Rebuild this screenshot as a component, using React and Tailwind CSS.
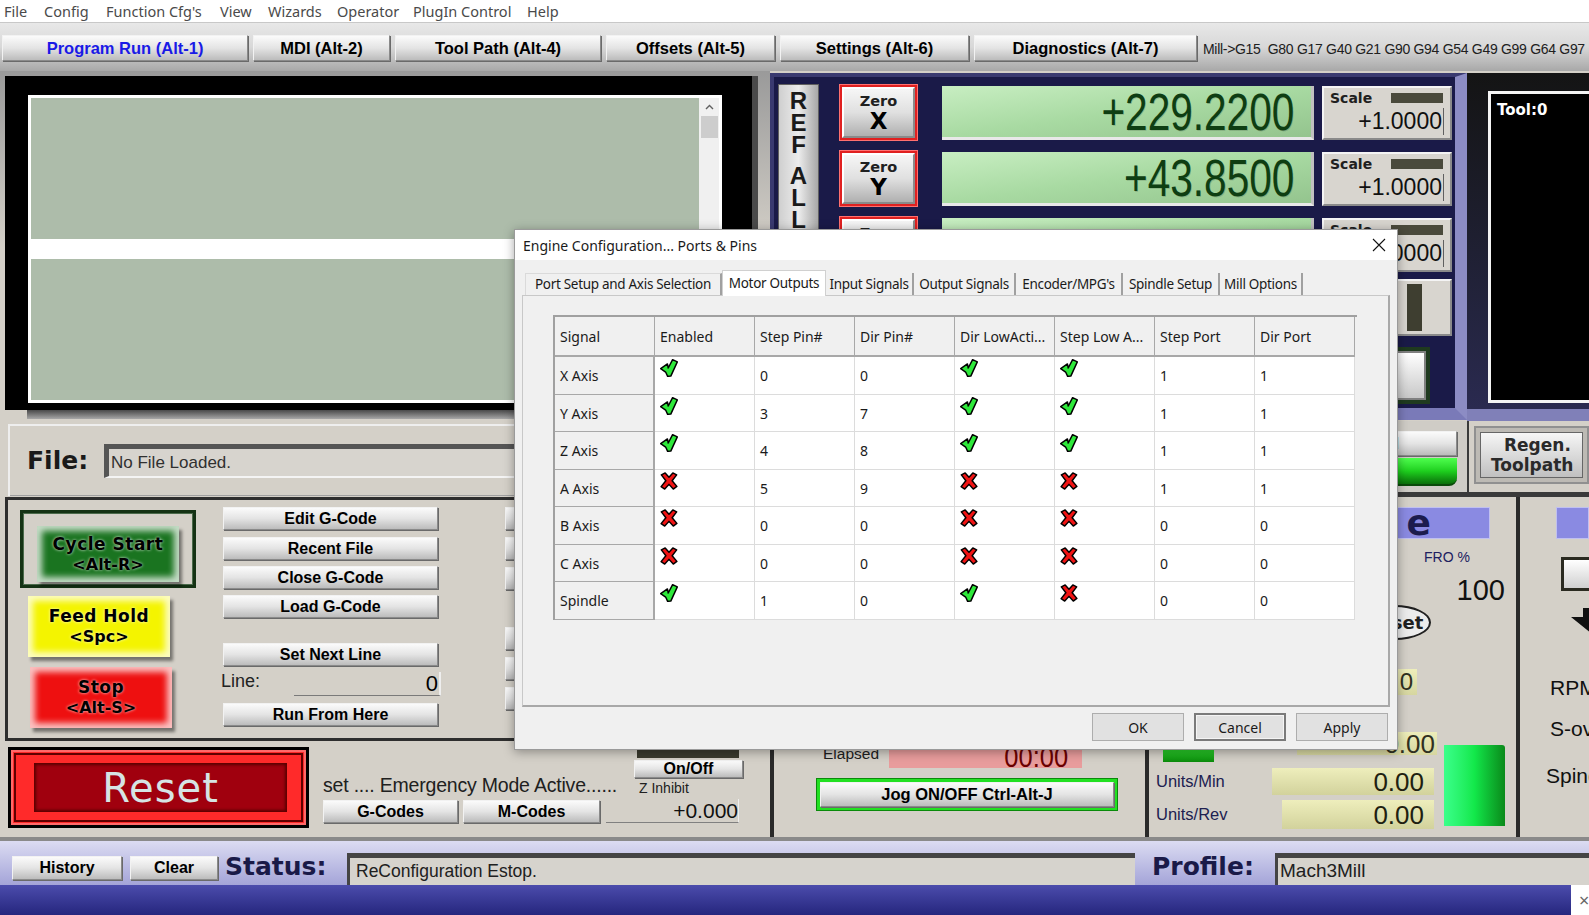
import React from "react";

const NARROW = "font-['Liberation_Sans',Arial,sans-serif]";
const VERD = "font-['DejaVu_Sans',Verdana,sans-serif]";
const UI = "font-['Noto_Sans','Segoe_UI',sans-serif]";
const ARIAL = "font-['Liberation_Sans',Arial,sans-serif]";

function MBtn({ className = "", children }) {
  return (
    <div
      className={`flex items-center justify-center bg-linear-to-b from-[#fbfbfb] via-[#e4e4e4] to-[#bcbcbc] border border-[#8a8a8a] border-t-[#f2f2f2] border-l-[#f2f2f2] shadow-[1px_1px_0_#6a6a6a] ${ARIAL} font-bold text-black whitespace-nowrap ${className}`}
    >
      {children}
    </div>
  );
}

function Check() {
  return (
    <svg width="18" height="18" viewBox="0 0 16 16">
      <path d="M0.6 8.6 L6.6 4.4 L7.3 8 L11.2 0.6 L15.4 2.6 L9.6 15.2 L6.8 15.4 L5 11.6 Z" fill="#2ee83a" stroke="#000" strokeWidth="1.3" strokeLinejoin="round" />
    </svg>
  );
}

function Cross() {
  return (
    <svg width="18" height="18" viewBox="0 0 16 16">
      <path d="M1.2 2.6 L4.6 0.8 L8 4.6 L11.4 0.8 L14.8 2.6 L10.8 7.8 L15 12.8 L11.8 15.2 L8 11 L4.2 15.2 L1 13 L5.2 7.8 Z" fill="#f01414" stroke="#000" strokeWidth="1.3" strokeLinejoin="round" />
    </svg>
  );
}

function MenuBar() {
  const items = [
    ["File", "w-[40px]"],
    ["Config", "w-[62px]"],
    ["Function Cfg's", "w-[114px]"],
    ["View", "w-[48px]"],
    ["Wizards", "w-[69px]"],
    ["Operator", "w-[76px]"],
    ["PlugIn Control", "w-[114px]"],
    ["Help", "w-[50px]"],
  ];
  return (
    <div className={`h-[23px] bg-white flex items-center pl-[4px] ${UI} text-[14.5px] text-[#4a4a4a] border-b border-[#c8c8c8]`}>
      {items.map(([t, w]) => (
        <div key={t} className={`${w} whitespace-nowrap leading-none`}>{t}</div>
      ))}
    </div>
  );
}

function TabsRow() {
  const tabs = [
    ["Program Run (Alt-1)", "w-[246px]", true],
    ["MDI (Alt-2)", "w-[137px]"],
    ["Tool Path (Alt-4)", "w-[206px]"],
    ["Offsets (Alt-5)", "w-[169px]"],
    ["Settings (Alt-6)", "w-[189px]"],
    ["Diagnostics (Alt-7)", "w-[223px]"],
  ];
  return (
    <div className="h-[48px] bg-linear-to-b from-[#e8e8e8] via-[#d8d8d8] to-[#a8a8a8] flex items-start pt-[12px] pl-[2px]">
      <div className="flex gap-[5px]">
        {tabs.map(([t, w, active]) => (
          <MBtn key={t} className={`${w} h-[26px] text-[16.5px]`}>
            <span className={active ? "text-[#1a1ae6]" : ""}>{t}</span>
          </MBtn>
        ))}
      </div>
      <div className={`ml-[6px] mt-[4px] ${NARROW} text-[14px] text-[#202020] whitespace-nowrap tracking-[-0.3px]`}>
        Mill-&gt;G15&nbsp; G80 G17 G40 G21 G90 G94 G54 G49 G99 G64 G97
      </div>
    </div>
  );
}

function GlowBtn({ className = "", color, line1, line2 }) {
  return (
    <div className={`flex flex-col items-center justify-center ${color} shadow-[inset_0_0_6px_5px_rgba(255,255,255,0.75),3px_4px_3px_rgba(0,0,0,0.45)] ${VERD} font-bold text-black ${className}`}>
      <div className="text-[17px] leading-[21px] tracking-[0.5px] [text-shadow:0_0_3px_rgba(255,255,255,0.9)]">{line1}</div>
      <div className="text-[16px] leading-[20px] [text-shadow:0_0_3px_rgba(255,255,255,0.9)]">{line2}</div>
    </div>
  );
}

function LeftColumn() {
  return (
    <div className="w-[770px] shrink-0 flex flex-col">
      {/* Gcode frame */}
      <div className="h-[353px] pt-[5px] pl-[5px] bg-linear-to-b from-[#9a9a9a] via-[#d4d0c8] to-[#d4d0c8]">
        <div className="w-[753px] h-[334px] bg-black pt-[19px] pl-[23px] border-r-[6px] border-r-[#4a4a4a]">
          <div className="w-[694px] h-[308px] border-[3px] border-white bg-white flex">
            <div className="flex-1 flex flex-col bg-[#adbcaa]">
              <div className="h-[141px]" />
              <div className="h-[20px] bg-white" />
              <div className="flex-1" />
            </div>
            <div className="w-[20px] bg-[#f0f0f0] flex flex-col items-center">
              <div className="h-[18px] flex items-center justify-center">
                <svg width="9" height="6" viewBox="0 0 9 6"><path d="M1 5 L4.5 1.5 L8 5" stroke="#606060" strokeWidth="1.4" fill="none" /></svg>
              </div>
              <div className="w-[17px] h-[22px] bg-[#cdcdcd]" />
            </div>
          </div>
        </div>
        <div className="h-[9px] ml-[22px] w-[731px] bg-linear-to-b from-[#4a4a4a] to-[#a8a8a8]" />
      </div>

      {/* File row */}
      <div className="h-[72px] ml-[8px] bg-[#d4d0c8] border-t-2 border-l-2 border-[#eeeeee] shadow-[inset_-1px_-1px_0_#a0a0a0] flex items-center pl-[17px]">
        <div className={`${VERD} font-bold text-[25px] text-[#1a1a1a] w-[77px]`}>File:</div>
        <div className={`flex-1 h-[34px] bg-[#d7d4ce] border-t-[5px] border-l-[5px] border-[#555] border-b-2 border-b-[#f4f4f4] flex items-center pl-[2px] ${ARIAL} text-[17px] text-[#303030]`}>
          No File Loaded.
        </div>
      </div>

      {/* Controls panel */}
      <div className="h-[244px] ml-[5px] mt-[1px] border-[3px] border-r-0 border-[#2e2e2e] bg-[#d4d0c8] flex">
        <div className="w-[215px] pl-[12px] pt-[10px] flex flex-col">
          <div className="w-[176px] h-[78px] border-[3px] border-[#143214] flex items-end pl-[14px] pb-[3px] shadow-[inset_0_0_0_1px_#4a6a4a]">
            <GlowBtn className="w-[142px] h-[56px]" color="bg-[#1a7420]" line1="Cycle Start" line2="<Alt-R>" />
          </div>
          <GlowBtn className="w-[142px] h-[61px] mt-[8px] ml-[8px]" color="bg-[#f4f400]" line1="Feed Hold" line2="<Spc>" />
          <GlowBtn className="w-[142px] h-[61px] mt-[10px] ml-[10px]" color="bg-[#ee1010]" line1="Stop" line2="<Alt-S>" />
        </div>
        <div className="w-[218px] pt-[7px] flex flex-col">
          <MBtn className="w-[215px] h-[23px] text-[16px]">Edit G-Code</MBtn>
          <MBtn className="w-[215px] h-[23px] text-[16px] mt-[7px]">Recent File</MBtn>
          <MBtn className="w-[215px] h-[23px] text-[16px] mt-[6px]">Close G-Code</MBtn>
          <MBtn className="w-[215px] h-[23px] text-[16px] mt-[6px]">Load G-Code</MBtn>
          <MBtn className="w-[215px] h-[23px] text-[16px] mt-[25px]">Set Next Line</MBtn>
          <div className="h-[25px] mt-[5px] flex items-end">
            <div className={`${ARIAL} text-[18px] text-[#222] w-[73px] pb-[1px] -ml-[2px]`}>Line:</div>
            <div className={`w-[147px] h-[24px] border-b border-[#7a7a7a] border-r-2 border-r-[#eee] text-right ${ARIAL} text-[22px] leading-[24px] text-black pr-[1px]`}>0</div>
          </div>
          <MBtn className="w-[215px] h-[23px] text-[16px] mt-[7px]">Run From Here</MBtn>
        </div>
        <div className="ml-[64px] pt-[7px] flex flex-col gap-[7px]">
          <MBtn className="w-[200px] h-[23px]" />
          <MBtn className="w-[200px] h-[23px]" />
          <MBtn className="w-[200px] h-[23px]" />
          <MBtn className="w-[200px] h-[23px] mt-[30px]" />
          <MBtn className="w-[200px] h-[23px]" />
          <MBtn className="w-[200px] h-[23px]" />
        </div>
      </div>

      {/* Reset row */}
      <div className="h-[96px] bg-[#d4d0c8] flex pt-[6px]">
        <div className="ml-[8px] w-[301px] h-[81px] bg-black p-[3px]">
          <div className="w-full h-full bg-[#ff2a2a] p-[3px] shadow-[inset_0_0_0_2px_#ff6a6a]">
            <div className="w-full h-full border-2 border-[#600000] p-[8px] pl-[18px] pr-[14px]">
              <div className={`w-full h-full bg-[#a0000e] shadow-[inset_0_0_3px_2px_#5a0000] flex items-center justify-center ${VERD} text-[40px] text-[#d6e4e4] tracking-[1px]`}>
                Reset
              </div>
            </div>
          </div>
        </div>
        <div className="ml-[14px] w-[279px] flex flex-col pt-[26px]">
          <div className={`${NARROW} text-[19.5px] leading-[24px] text-[#202020] whitespace-nowrap tracking-[-0.2px]`}>set .... Emergency Mode Active......</div>
          <div className="flex gap-[5px] mt-[3px]">
            <MBtn className="w-[135px] h-[23px] text-[16px]">G-Codes</MBtn>
            <MBtn className="w-[137px] h-[23px] text-[16px]">M-Codes</MBtn>
          </div>
        </div>
        <div className="ml-[4px] w-[137px] flex flex-col items-start">
          <div className="ml-[31px] w-[102px] h-[13px] bg-[#3a3a2e] -mt-[2px]" />
          <MBtn className="ml-[28px] w-[109px] h-[18px] text-[16px] mt-[2px]">On/Off</MBtn>
          <div className={`ml-[33px] ${NARROW} text-[14px] leading-[18px] text-[#202020] mt-[1px]`}>Z Inhibit</div>
          <div className={`w-[133px] h-[24px] mt-[2px] border-b border-[#808080] border-r border-r-[#eee] text-right ${NARROW} text-[21px] leading-[24px] text-[#101010]`}>+0.000</div>
        </div>
      </div>
    </div>
  );
}

function ZeroBtn({ axis }) {
  return (
    <div className="w-[79px] h-[57px] bg-[#e02020] p-[3px] shadow-[inset_0_0_0_1px_#ff7070]">
      <div className={`w-full h-full bg-linear-to-b from-[#f6f6f6] via-[#e0e0e0] to-[#b0b0b0] border-2 border-[#8a8a8a] border-t-white border-l-white flex flex-col items-center justify-center ${VERD} text-black`}>
        {axis && <div className="text-[14.5px] font-bold leading-[17px] text-[#202020]">Zero</div>}
        {axis && <div className="text-[23px] font-bold leading-[23px]">{axis}</div>}
      </div>
    </div>
  );
}

function DroDisplay({ value }) {
  return (
    <div className="w-[372px] h-[54px] bg-linear-to-br from-[#c8eec2] via-[#a8daa2] to-[#94c48e] border-b-[3px] border-[#e8e8e8] border-r-[3px] border-r-[#c0c0c0] flex items-center justify-end pr-[17px]">
      {value && (
        <span className={`inline-block origin-right scale-x-[0.78] ${ARIAL} text-[52px] leading-[50px] text-[#0e3e12] [text-shadow:1px_1px_0_rgba(0,0,0,0.15)]`}>{value}</span>
      )}
    </div>
  );
}

function ScaleBox({ value }) {
  return (
    <div className="w-[130px] h-[54px] bg-[#d8d5cf] border-2 border-[#f4f4f4] border-r-[#8a8a8a] border-b-[#8a8a8a] flex flex-col pl-[6px] pr-[6px]">
      <div className="flex items-center h-[20px]">
        <div className={`${VERD} font-bold text-[14px] text-[#202020] w-[61px]`}>Scale</div>
        <div className="w-[52px] h-[10px] bg-[#4a4a3c]" />
      </div>
      <div className={`text-right ${ARIAL} text-[23px] leading-[27px] text-[#101010] border-r border-[#606060] pr-[1px]`}>{value}</div>
    </div>
  );
}

function RightColumn() {
  return (
    <div className="flex-1 min-w-0 flex flex-col overflow-hidden">
      {/* top row */}
      <div className="h-[350px] flex bg-[#d4d0c8]">
        <div className="w-[697px] shrink-0 h-[347px] mt-[2px] bg-[#1a1a48] border-t-[4px] border-l-[4px] border-[#3a3a70] border-r-[12px] border-r-[#8c8cc4] border-b-[12px] border-b-[#7a7ab8] flex pt-[7px] pl-[4px]">
          <div className={`w-[41px] h-[322px] bg-linear-to-r from-[#cfcfcf] via-[#ececec] to-[#a8a8a8] border border-[#606060] flex flex-col items-center pt-[5px] ${ARIAL} font-bold text-[24px] leading-[22px] text-[#1a1a1a]`}>
            <div>R</div>
            <div>E</div>
            <div>F</div>
            <div className="mt-[9px]">A</div>
            <div>L</div>
            <div>L</div>
          </div>
          <div className="ml-[20px] flex flex-col gap-[9px]">
            <ZeroBtn axis="X" />
            <ZeroBtn axis="Y" />
            <ZeroBtn axis="Z" />
            <ZeroBtn />
          </div>
          <div className="ml-[24px] flex flex-col gap-[12px] pt-[2px]">
            <DroDisplay value="+229.2200" />
            <DroDisplay value="+43.8500" />
            <DroDisplay />
            <DroDisplay />
          </div>
          <div className="ml-[8px] flex flex-col gap-[12px] pt-[2px]">
            <ScaleBox value="+1.0000" />
            <ScaleBox value="+1.0000" />
            <ScaleBox value="+1.0000" />
            <div className="w-[130px] h-[57px] -mt-[5px] bg-[#d8d5cf] border-2 border-[#f4f4f4] border-r-[#8a8a8a] border-b-[#8a8a8a] flex items-center justify-end pr-[28px]">
              <div className="w-[15px] h-[47px] bg-[#3e3e30]" />
            </div>
            <div className="w-[130px] h-[57px] flex items-center justify-end pr-[22px] -mt-[1px]">
              <div className="w-[64px] h-[57px] bg-[#1f3a1f] p-[4px]">
                <div className="w-full h-full bg-linear-to-b from-white to-[#c8c8c8] border-2 border-[#808080]" />
              </div>
            </div>
          </div>
        </div>
        <div className="flex-1 min-w-0 bg-linear-to-b from-[#141414] to-[#2a2a50] pt-[18px] pl-[21px] mt-[2px] border-b-[12px] border-b-[#8080b8]">
          <div className={`h-[312px] bg-black border-[3px] border-[#f4f4f4] border-r-0 pl-[6px] pt-[5px] ${VERD} font-bold text-[15px] text-white`}>
            Tool:0
          </div>
        </div>
      </div>

      {/* strip */}
      <div className="h-[76px] flex bg-[#d4d0c8]">
        <div className="w-[697px] shrink-0 bg-[#cfccc6] border-b-[5px] border-[#3a3a3a] flex justify-end items-start pt-[10px] pr-[10px]">
          <div className="flex flex-col">
            <MBtn className="w-[210px] h-[25px] text-[16px]">Tool Control</MBtn>
            <div className="w-[210px] h-[28px] mt-[2px] bg-linear-to-b from-[#4dff4d] via-[#1ed01e] to-[#0a700a] rounded-br-[8px] border-b-2 border-[#0a4a0a]" />
          </div>
        </div>
        <div className="flex-1 min-w-0 border-l-2 border-[#3a3a3a] border-b-[5px] border-b-[#3a3a3a] pt-[5px] pl-[5px]">
          <div className="h-[58px] bg-[#bdbab4] border-2 border-[#909090] p-[4px] overflow-hidden">
            <div className={`h-full bg-linear-to-b from-[#f6f6f6] to-[#c0c0c0] border border-[#666] flex flex-col items-start justify-center pl-[10px] ${VERD} font-bold text-[17px] leading-[20px] text-[#2a2a2a] whitespace-nowrap`}>
              <div className="pl-[13px]">Regen.</div>
              <div>Toolpath</div>
            </div>
          </div>
        </div>
      </div>

      {/* panels row */}
      <div className="flex-1 flex bg-[#d4d0c8]">
        {/* middle panel */}
        <div className="w-[375px] shrink-0 border-l-[4px] border-[#2a2a2a] flex flex-col">
          <div className="flex items-start mt-[248px]">
            <div className={`ml-[49px] w-[66px] ${ARIAL} text-[15.5px] text-[#202020] leading-[18px]`}>Elapsed</div>
            <div className="w-[193px] h-[23px] bg-[#e89c9c] flex items-center justify-end pr-[14px]">
              <span className={`inline-block origin-right scale-x-[0.85] ${ARIAL} text-[30px] text-[#6a0000] leading-[22px]`}>00:00</span>
            </div>
          </div>
          <div className="ml-[42px] mt-[10px] w-[302px] h-[33px] bg-[#22e022] p-[3px] border border-[#0a8a0a]">
            <MBtn className="w-full h-full text-[16.5px]">Jog ON/OFF Ctrl-Alt-J</MBtn>
          </div>
        </div>
        {/* feed panel */}
        <div className="w-[375px] shrink-0 flex flex-col border-l-[4px] border-r-[4px] border-[#2a2a2a]">
          <div className={`ml-[11px] mt-[10px] w-[330px] h-[32px] bg-[#8a8ae2] border border-[#c0c0f0] flex items-center justify-end pr-[48px] ${VERD} font-bold text-[36px] tracking-[10px] text-[#1c1c4e] leading-[30px] overflow-hidden whitespace-nowrap`}>
            Feed Rate
          </div>
          <div className={`pl-[275px] mt-[10px] ${ARIAL} text-[14px] text-[#202060] leading-[16px]`}>FRO %</div>
          <div className={`text-right pr-[11px] mt-[11px] ${ARIAL} text-[29px] leading-[28px] text-[#101010]`}>100</div>
          <div className="ml-[209px] mt-[1px] w-[73px] h-[35px] rounded-[50%] border-2 border-[#202020] bg-[#ececec] flex items-center justify-center">
            <span className={`${VERD} font-bold text-[18px] text-[#202020] whitespace-nowrap`}>Reset</span>
          </div>
          <div className="ml-[128px] mt-[29px] w-[140px] h-[26px] bg-linear-to-b from-[#eeeeba] to-[#d6d6a0] flex items-center justify-end pr-[4px]">
            <span className={`${ARIAL} text-[24px] text-[#303020] leading-none`}>0</span>
          </div>
          <div className="flex mt-[37px]">
            <div className="w-[295px] flex flex-col">
              <div className="flex h-[23px]">
                <div className="w-[51px] h-[14px] mt-[16px] ml-[14px] bg-linear-to-b from-[#30e030] to-[#0a8a0a]" />
                <div className={`ml-[83px] w-[140px] h-[23px] bg-linear-to-b from-[#eeeeba] to-[#d6d6a0] flex items-center justify-end pr-[2px] ${ARIAL} text-[26px] text-[#303020] leading-none`}>0.00</div>
              </div>
              <div className="flex items-center mt-[13px]">
                <div className={`ml-[7px] w-[116px] ${ARIAL} text-[16.5px] text-[#202050]`}>Units/Min</div>
                <div className={`w-[162px] h-[27px] bg-linear-to-b from-[#eeeebc] to-[#d2d29c] flex items-center justify-end pr-[10px] ${ARIAL} text-[26px] text-[#202010] leading-none`}>0.00</div>
              </div>
              <div className="flex items-center mt-[5px]">
                <div className={`ml-[7px] w-[126px] ${ARIAL} text-[16.5px] text-[#202050]`}>Units/Rev</div>
                <div className={`w-[152px] h-[29px] bg-linear-to-b from-[#eeeebc] to-[#d2d29c] flex items-center justify-end pr-[10px] ${ARIAL} text-[26px] text-[#202010] leading-none`}>0.00</div>
              </div>
            </div>
            <div className="w-[61px] h-[81px] mt-[13px] bg-linear-to-r from-[#3aff8a] via-[#12e84a] to-[#0a8a1a] rounded-tr-[3px]" />
          </div>
        </div>
        {/* spindle panel */}
        <div className="flex-1 min-w-0 overflow-hidden flex flex-col">
          <div className="ml-[36px] mt-[10px] h-[32px] bg-[#8a8ae2] border border-[#c0c0f0]" />
          <div className="ml-[41px] mt-[18px] h-[34px] bg-[#2a2a20] p-[3px] pr-0">
            <div className="w-full h-full bg-linear-to-b from-white to-[#d0d0d0]" />
          </div>
          <div className="ml-[51px] mt-[17px]">
            <svg width="50" height="26" viewBox="0 0 50 26"><path d="M0 9 L12 9 L12 0 L30 0 L30 9 L42 9 L21 26 Z" fill="#111" /></svg>
          </div>
          <div className={`ml-[30px] mt-[42px] ${ARIAL} text-[21px] text-[#101010] whitespace-nowrap leading-[24px]`}>RPM</div>
          <div className={`ml-[30px] mt-[17px] ${ARIAL} text-[21px] text-[#101010] whitespace-nowrap leading-[24px]`}>S-ov</div>
          <div className={`ml-[26px] mt-[23px] ${ARIAL} text-[21px] text-[#101010] whitespace-nowrap leading-[24px]`}>Spindle</div>
        </div>
      </div>
    </div>
  );
}

function StatusBar() {
  return (
    <div className="h-[78px] flex flex-col border-t-[4px] border-[#8a8a8a]">
      <div className="h-[44px] bg-linear-to-b from-[#dcdcf2] to-[#a4a4d8] flex items-start pl-[12px] pt-[12px] overflow-hidden">
        <MBtn className="w-[110px] h-[24px] text-[16px] mt-[3px] shrink-0">History</MBtn>
        <MBtn className="w-[88px] h-[24px] text-[16px] ml-[8px] mt-[3px] shrink-0">Clear</MBtn>
        <div className={`ml-[7px] w-[122px] shrink-0 ${VERD} font-bold text-[25px] text-[#1a1a48] leading-[28px]`}>Status:</div>
        <div className={`w-[788px] shrink-0 h-[32px] bg-[#d6d3cd] border-t-[5px] border-l-[3px] border-[#444] flex items-center pl-[6px] ${ARIAL} text-[17.5px] text-[#202020]`}>
          ReConfiguration Estop.
        </div>
        <div className={`ml-[17px] w-[123px] shrink-0 ${VERD} font-bold text-[25px] text-[#1a1a48] leading-[28px]`}>Profile:</div>
        <div className={`flex-1 h-[32px] bg-[#d6d3cd] border-t-[5px] border-l-[3px] border-[#444] flex items-center pl-[2px] ${ARIAL} text-[19px] text-[#202020]`}>
          Mach3Mill
        </div>
      </div>
      <div className="flex-1 bg-linear-to-b from-[#4c4cac] to-[#26267e] flex justify-end">
        <div className="w-[18px] bg-white flex items-center pl-[8px] text-[#666] text-[18px] overflow-hidden">×</div>
      </div>
    </div>
  );
}

function Dialog() {
  const cols = ["Signal", "Enabled", "Step Pin#", "Dir Pin#", "Dir LowActi...", "Step Low A...", "Step Port", "Dir Port"];
  const rows = [
    ["X Axis", true, "0", "0", true, true, "1", "1"],
    ["Y Axis", true, "3", "7", true, true, "1", "1"],
    ["Z Axis", true, "4", "8", true, true, "1", "1"],
    ["A Axis", false, "5", "9", false, false, "1", "1"],
    ["B Axis", false, "0", "0", false, false, "0", "0"],
    ["C Axis", false, "0", "0", false, false, "0", "0"],
    ["Spindle", true, "1", "0", true, false, "0", "0"],
  ];
  const tabs = [
    ["Port Setup and Axis Selection", "w-[197px]"],
    ["Motor Outputs", "w-[104px]"],
    ["Input Signals", "w-[88px]"],
    ["Output Signals", "w-[102px]"],
    ["Encoder/MPG's", "w-[107px]"],
    ["Spindle Setup", "w-[97px]"],
    ["Mill Options", "w-[83px]"],
  ];
  return (
    <div className={`absolute left-[514px] top-[229px] w-[884px] h-[521px] bg-[#f0f0f0] border border-[#9a9a9a] shadow-[0_2px_10px_rgba(0,0,0,0.35)] flex flex-col ${UI} text-[#1a1a1a]`}>
      <div className="h-[30px] bg-white flex items-center pl-[8px] pr-[11px] justify-between">
        <div className="text-[14px] leading-none pt-[1px]">Engine Configuration... Ports &amp; Pins</div>
        <svg width="14" height="14" viewBox="0 0 14 14"><path d="M1 1 L13 13 M13 1 L1 13" stroke="#111" strokeWidth="1.1" /></svg>
      </div>
      <div className="flex items-end pl-[10px] mt-[10px] h-[25px]">
        {tabs.map(([t, w], i) => {
          const active = i === 1;
          return (
            <div
              key={t}
              className={`${w} ${active ? "h-[26px] bg-white border border-b-0 border-[#d0d0d0] -mb-px z-10" : "h-[22px] border-r-2 border-[#a0a0a0] bg-[#f0f0f0]"} ${i === 0 ? "bg-[#e6e6e6] border-l border-t border-l-[#dadada] border-t-[#dadada]" : ""} flex items-center justify-center text-[13.5px] whitespace-nowrap tracking-[-0.3px]`}
            >
              {t}
            </div>
          );
        })}
      </div>
      <div className="mx-[7px] h-[412px] border border-[#c8c8c8] border-r-2 border-r-[#a8a8a8] border-b-2 border-b-[#a8a8a8] bg-[#f0f0f0] pl-[30px] pt-[19px]">
        <div className="w-[804px] border-l-2 border-t-2 border-[#a0a0a0]">
          <div className="flex h-[40px]">
            {cols.map((c) => (
              <div key={c} className="w-[100px] h-full bg-[#f0f0f0] border-r border-b-2 border-[#a8a8a8] flex items-center pl-[5px] text-[14px] whitespace-nowrap overflow-hidden">
                {c}
              </div>
            ))}
          </div>
          {rows.map((r) => (
            <div key={r[0]} className="flex h-[37.5px]">
              {r.map((v, j) => (
                <div
                  key={j}
                  className={`w-[100px] h-full border-r border-b ${j === 0 ? "bg-[#f0f0f0] border-[#a8a8a8] border-r-2" : "bg-white border-[#dcdcdc]"} relative pl-[5px] flex items-center text-[14px]`}
                >
                  {typeof v === "boolean" ? (
                    <div className="absolute left-[5px] top-[2px]">{v ? <Check /> : <Cross />}</div>
                  ) : (
                    <span className="pt-[1px]">{v}</span>
                  )}
                </div>
              ))}
            </div>
          ))}
        </div>
      </div>
      <div className="flex justify-end gap-[10px] pr-[9px] mt-[6px]">
        <div className="w-[92px] h-[28px] bg-[#e1e1e1] border border-[#adadad] flex items-center justify-center text-[14px]">OK</div>
        <div className="w-[92px] h-[28px] bg-[#e1e1e1] border-2 border-[#7a7a7a] shadow-[inset_0_0_0_1px_#f4f4f4] flex items-center justify-center text-[14px]">Cancel</div>
        <div className="w-[92px] h-[28px] bg-[#e1e1e1] border border-[#adadad] flex items-center justify-center text-[14px]">Apply</div>
      </div>
    </div>
  );
}

export default function App() {
  return (
    <div className="relative w-[1589px] h-[915px] overflow-hidden bg-[#d4d0c8]">
      <MenuBar />
      <TabsRow />
      <div className="h-[766px] flex">
        <LeftColumn />
        <RightColumn />
      </div>
      <StatusBar />
      <Dialog />
    </div>
  );
}
